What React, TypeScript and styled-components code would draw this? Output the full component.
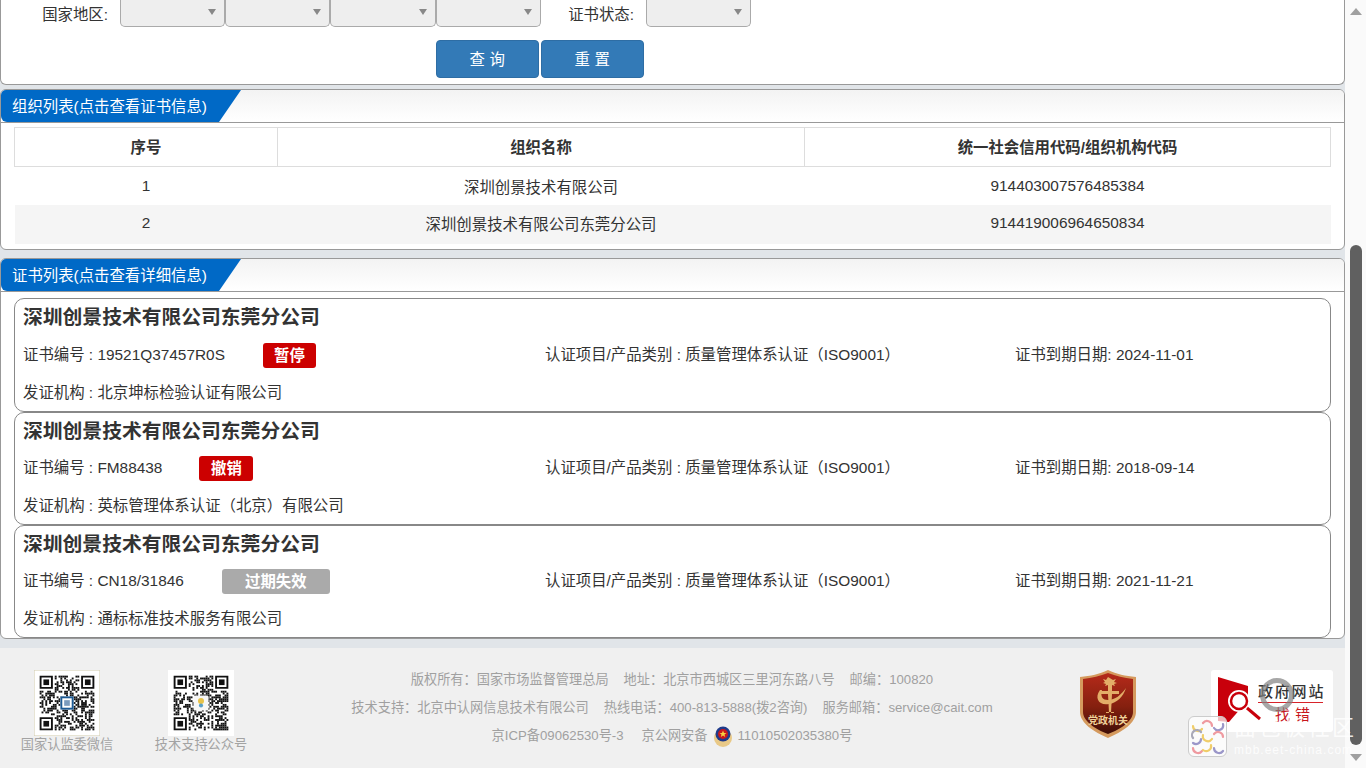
import React from "react";
import styled, { createGlobalStyle } from "styled-components";

const FONT = `"Liberation Sans", "Noto Sans CJK SC", sans-serif`;

const Global = createGlobalStyle`
  html, body { margin: 0; padding: 0; height: 768px; overflow: hidden; background: #e1e5e9; }
  body { font-family: ${FONT}; color: #333; }
  * { box-sizing: border-box; }
`;

const Shell = styled.div`
  position: relative;
  display: flex;
  width: 1366px;
  height: 768px;
  overflow: hidden;
`;
const Main = styled.div`
  width: 1345px;
  flex: none;
  display: flex;
  flex-direction: column;
`;
const ScrollTrack = styled.div`
  width: 21px;
  flex: none;
  background: #fafafa;
  display: flex;
  flex-direction: column;
  align-items: center;
  position: relative;
  padding-left: 1px;
`;
const ArrowUp = styled.div`
  width: 0;
  height: 0;
  margin-top: 8px;
  border-left: 6px solid transparent;
  border-right: 6px solid transparent;
  border-bottom: 7px solid #a0a0a0;
`;
const Thumb = styled.div`
  width: 12px;
  height: 500px;
  margin-top: 230px;
  border-radius: 6px;
  background: #606060;
`;
const ArrowDown = styled.div`
  width: 0;
  height: 0;
  margin-top: 9px;
  border-left: 6px solid transparent;
  border-right: 6px solid transparent;
  border-top: 7px solid #a0a0a0;
`;

const FilterPanel = styled.section`
  height: 85px;
  background: #fff;
  border: 1px solid #999;
  border-top: none;
  border-radius: 0 0 6px 6px;
  display: flex;
  flex-direction: column;
`;
const FilterRow = styled.div`
  display: flex;
  align-items: flex-start;
  height: 40px;
`;
const FilterLabel = styled.label<{ $w: number }>`
  width: ${(p) => p.$w}px;
  flex: none;
  height: 26px;
  line-height: 30px;
  font-size: 15.4px;
  color: #333;
  text-align: right;
  padding-right: 12px;
  white-space: nowrap;
`;
const Select = styled.div<{ $w: number }>`
  width: ${(p) => p.$w}px;
  height: 27px;
  flex: none;
  margin-right: 0;
  background: #eee;
  border: 1px solid #aaa;
  border-top: none;
  border-radius: 0 0 5px 5px;
  position: relative;
  &::after {
    content: "";
    position: absolute;
    right: 8px;
    top: 9px;
    border-left: 4px solid transparent;
    border-right: 4px solid transparent;
    border-top: 6px solid #888;
  }
`;
const ButtonRow = styled.div`
  display: flex;
  gap: 2px;
  padding-left: 435px;
`;
const Btn = styled.button`
  width: 103px;
  height: 38px;
  border: 1px solid #2e6da4;
  border-radius: 4px;
  background: #337ab7;
  color: #fff;
  font-family: ${FONT};
  font-size: 15.4px;
  letter-spacing: 4.5px;
  padding: 0 0 3px 4px;
`;

const Panel = styled.section<{ $mt: number; $h: number }>`
  margin-top: ${(p) => p.$mt}px;
  height: ${(p) => p.$h}px;
  background: #fff;
  border: 1px solid #999;
  border-radius: 6px;
  overflow: hidden;
  flex: none;
`;
const PanelHead = styled.header`
  height: 33px;
  background: linear-gradient(#f3f3f3, #fff);
  border-bottom: 1px solid #999;
  display: flex;
`;
const HeadTab = styled.h2<{ $w: number }>`
  margin: 0;
  width: ${(p) => p.$w}px;
  height: 32px;
  background: #0069c6;
  color: #fff;
  font-size: 15.4px;
  font-weight: normal;
  line-height: 33px;
  padding-left: 11px;
  white-space: nowrap;
  clip-path: polygon(0 0, 100% 0, calc(100% - 22px) 100%, 0 100%);
  border-bottom-left-radius: 6px;
`;
const TableWrap = styled.div`
  padding: 4px 14px 0 13px;
`;
const Table = styled.table`
  width: 1316px;
  border-collapse: collapse;
  table-layout: fixed;
  font-size: 15.4px;
  color: #333;
  th {
    height: 39px;
    border: 1px solid #ddd;
    font-weight: bold;
    text-align: center;
    padding: 0 0 3px;
  }
  td {
    height: 38.5px;
    text-align: center;
    padding: 0 0 1px;
  }
  tbody tr:nth-child(2) td {
    background: #f5f5f5;
    padding-bottom: 3px;
  }
`;
const CardList = styled.div`
  padding: 6px 13px 0;
  display: flex;
  flex-direction: column;
  gap: 0;
`;
const CardTitle = styled.h3`
  margin: 0;
  height: 36px;
  line-height: 36px;
  font-size: 19.8px;
  font-weight: bold;
  color: #333;
`;
const Card = styled.article`
  width: 1317px;
  height: 113px;
  border: 1px solid #888;
  border-radius: 10px;
  padding: 0 8px;
  position: relative;
  background: #fff;
  &:first-child {
    height: 114px;
  }
  &:first-child ${CardTitle} {
    height: 37px;
    line-height: 37px;
  }
`;
const CardRow = styled.div`
  display: flex;
  height: 38px;
  line-height: 38px;
  font-size: 15.4px;
  color: #333;
`;
const Cell = styled.div<{ $w: number }>`
  width: ${(p) => p.$w}px;
  flex: none;
  white-space: nowrap;
  display: flex;
  align-items: center;
`;
const Status = styled.span<{ $grey?: boolean; $ml: number; $w: number }>`
  display: inline-block;
  margin-left: ${(p) => p.$ml}px;
  width: ${(p) => p.$w}px;
  height: 25px;
  line-height: 25px;
  border-radius: 3px;
  text-align: center;
  font-size: 15.4px;
  font-weight: bold;
  color: #fff;
  background: ${(p) => (p.$grey ? "#aaaaaa" : "#cc0000")};
`;

const Footer = styled.footer`
  margin-top: 9px;
  height: 120px;
  background: #f0f0f0;
  position: relative;
  display: flex;
  flex: none;
`;
const QrBlock = styled.div<{ $w: number }>`
  width: ${(p) => p.$w}px;
  flex: none;
  display: flex;
  flex-direction: column;
  align-items: center;
  padding-top: 22px;
  font-size: 13.2px;
  color: #a3a3a3;
  line-height: 18px;
  white-space: nowrap;
`;
const FooterInfo = styled.div`
  width: 642px;
  flex: none;
  margin-left: 83px;
  padding-top: 18px;
  font-size: 13.2px;
  color: #a0a0a0;
  text-align: center;
`;
const InfoLine = styled.div<{ $gap: number }>`
  height: 28px;
  line-height: 28px;
  white-space: nowrap;
  display: flex;
  justify-content: center;
  align-items: center;
  gap: ${(p) => p.$gap}px;
`;
const Inline = styled.span`
  display: inline-flex;
  align-items: center;
  gap: 5px;
`;
const BadgeBox = styled.div`
  margin-left: 86px;
  padding-top: 22px;
  width: 132px;
  flex: none;
`;
const ReportBox = styled.div`
  width: 122px;
  height: 62px;
  margin-top: 22px;
  background: #fff;
  border-radius: 3px;
  position: relative;
  flex: none;
  overflow: hidden;
`;
const ReportTop = styled.span`
  position: absolute;
  left: 47px;
  top: 10px;
  font-size: 15px;
  font-weight: 500;
  color: #333;
  letter-spacing: 1.8px;
  white-space: nowrap;
`;
const ReportBottom = styled.span`
  position: absolute;
  left: 64px;
  top: 33px;
  font-size: 15px;
  color: #c8161d;
  letter-spacing: 5px;
  white-space: nowrap;
`;
const ReportRule = styled.i`
  position: absolute;
  left: 47px;
  top: 32px;
  width: 65px;
  height: 1px;
  background: #d8232a;
`;
const ReportIcon = styled.svg`
  position: absolute;
  left: 5px;
  top: 5px;
`;
const BusyRing = styled.div`
  position: absolute;
  left: 1260px;
  top: 678px;
  width: 34px;
  height: 34px;
  border: 5px solid rgba(130, 130, 130, 0.7);
  border-radius: 50%;
`;
const Watermark = styled.div`
  position: absolute;
  left: 1188px;
  top: 716px;
  display: flex;
  gap: 8px;
  pointer-events: none;
`;
const WmIcon = styled.div`
  width: 39px;
  height: 41px;
  background: rgba(255, 255, 255, 0.72);
  border: 1px solid #ccc;
  border-radius: 6px;
  display: flex;
  align-items: center;
  justify-content: center;
`;
const WmText = styled.div`
  color: rgba(255, 255, 255, 0.85);
  margin-left: -1px;
`;
const WmCn = styled.div`
  font-size: 22px;
  line-height: 24px;
  letter-spacing: 2.5px;
  white-space: nowrap;
`;
const WmEn = styled.div`
  font-size: 12px;
  line-height: 14px;
  letter-spacing: 1px;
  white-space: nowrap;
  margin-top: 3px;
`;

function QR({ seed, frame, center }: { seed: number; frame?: boolean; center: React.ReactNode }) {
  const n = 29;
  const cells: React.ReactNode[] = [];
  let s = seed;
  const rnd = () => {
    s = (s * 1103515245 + 12345) & 0x7fffffff;
    return (s >> 12) % 100 < 52;
  };
  const inFinder = (x: number, y: number) =>
    (x < 8 && y < 8) || (x > n - 9 && y < 8) || (x < 8 && y > n - 9);
  for (let y = 0; y < n; y++)
    for (let x = 0; x < n; x++) {
      const on = rnd();
      if (!inFinder(x, y) && on) cells.push(<rect key={`${x}-${y}`} x={x} y={y} width="1" height="1" />);
    }
  const finder = (x: number, y: number) => (
    <g key={`f${x}${y}`}>
      <path d={`M${x} ${y}h7v7h-7z M${x + 1} ${y + 1}v5h5v-5z`} fillRule="evenodd" />
      <rect x={x + 2} y={y + 2} width="3" height="3" />
    </g>
  );
  return (
    <svg width="66" height="66" viewBox="-3 -3 35 35" style={{ display: "block" }}>
      <rect x="-3" y="-3" width="35" height="35" fill="#fff" stroke={frame ? "#d5cfb4" : "none"} strokeWidth={frame ? 0.6 : 0} />
      <g fill="#111">
        {cells}
        {finder(0, 0)}
        {finder(n - 7, 0)}
        {finder(0, n - 7)}
      </g>
      {center}
    </svg>
  );
}

function PartyBadge() {
  return (
    <svg width="58" height="68" viewBox="0 0 58 68" style={{ display: "block" }}>
      <defs>
        <linearGradient id="sh" x1="0" y1="0" x2="0" y2="1">
          <stop offset="0" stopColor="#b52a1a" />
          <stop offset="0.55" stopColor="#85200f" />
          <stop offset="1" stopColor="#3f0e07" />
        </linearGradient>
      </defs>
      <path d="M1 7C12 6 20 4 29 0c9 4 17 6 28 7v35c0 11-14 20-28 26C15 62 1 53 1 42z" fill="#d59a5e" />
      <path d="M4 9c9-1 17-3 25-6 8 3 16 5 25 6v33c0 9-12 17-25 22C16 59 4 51 4 42z" fill="url(#sh)" />
      <path d="M29 7l-2 3-3-1 2 3-2 1 3 1-1 2 3-1v6h-8v3h8l1 19h-3v-1h8v1h-3l1-19h7v-3h-7v-6l3 1-1-2 3-1-3-1 2-3-3 1z" fill="#e3ad68" />
      <path d="M21 20C15 28 20 36 30 34c8-1 14-7 17-16-5 7-11 12-18 12-5 0-8-3-6-10z" fill="#e3ad68" />
      <text x="29" y="54" textAnchor="middle" fontSize="10" fontWeight="700" fill="#f0d29a" fontFamily={FONT}>党政机关</text>
    </svg>
  );
}

function PoliceEmblem() {
  return (
    <svg width="20" height="24" viewBox="0 0 20 24" style={{ display: "block" }}>
      <ellipse cx="10" cy="14" rx="9" ry="9" fill="#e9c987" />
      <circle cx="10" cy="10" r="7.5" fill="#1f3a8a" />
      <circle cx="10" cy="10" r="5" fill="#c8181d" />
      <path d="M10 6.5l1 2.4 2.5.1-2 1.6.7 2.4L10 11.6 7.8 13l.7-2.4-2-1.6 2.5-.1z" fill="#f5d142" />
    </svg>
  );
}

const rows = [
  ["1", "深圳创景技术有限公司", "914403007576485384"],
  ["2", "深圳创景技术有限公司东莞分公司", "914419006964650834"],
];
const certs = [
  { no: "19521Q37457R0S", status: "暂停", ml: 38, w: 53, date: "2024-11-01", org: "北京坤标检验认证有限公司" },
  { no: "FM88438", status: "撤销", ml: 37, w: 54, date: "2018-09-14", org: "英标管理体系认证（北京）有限公司" },
  { no: "CN18/31846", status: "过期失效", ml: 38, w: 108, grey: true, date: "2021-11-21", org: "通标标准技术服务有限公司" },
];

export default function App() {
  return (
    <Shell>
      <Global />
      <Main>
        <FilterPanel>
          <FilterRow>
            <FilterLabel $w={119}>国家地区:</FilterLabel>
            <Select $w={105} />
            <Select $w={105} />
            <Select $w={106} />
            <Select $w={105} />
            <FilterLabel $w={105}>证书状态:</FilterLabel>
            <Select $w={105} />
          </FilterRow>
          <ButtonRow>
            <Btn>查询</Btn>
            <Btn>重置</Btn>
          </ButtonRow>
        </FilterPanel>

        <Panel $mt={4} $h={161}>
          <PanelHead>
            <HeadTab $w={240}>组织列表(点击查看证书信息)</HeadTab>
          </PanelHead>
          <TableWrap>
            <Table>
              <colgroup>
                <col style={{ width: 263 }} />
                <col style={{ width: 527 }} />
                <col style={{ width: 526 }} />
              </colgroup>
              <thead>
                <tr>
                  <th>序号</th>
                  <th>组织名称</th>
                  <th>统一社会信用代码/组织机构代码</th>
                </tr>
              </thead>
              <tbody>
                {rows.map((r) => (
                  <tr key={r[0]}>
                    {r.map((c) => (
                      <td key={c}>{c}</td>
                    ))}
                  </tr>
                ))}
              </tbody>
            </Table>
          </TableWrap>
        </Panel>

        <Panel $mt={8} $h={381}>
          <PanelHead>
            <HeadTab $w={240}>证书列表(点击查看详细信息)</HeadTab>
          </PanelHead>
          <CardList>
            {certs.map((c) => (
              <Card key={c.no}>
                <CardTitle>深圳创景技术有限公司东莞分公司</CardTitle>
                <CardRow>
                  <Cell $w={522}>
                    证书编号 : {c.no}
                    <Status $ml={c.ml} $w={c.w} $grey={c.grey}>{c.status}</Status>
                  </Cell>
                  <Cell $w={470}>认证项目/产品类别 : 质量管理体系认证（ISO9001）</Cell>
                  <Cell $w={300}>证书到期日期: {c.date}</Cell>
                </CardRow>
                <CardRow>发证机构 : {c.org}</CardRow>
              </Card>
            ))}
          </CardList>
        </Panel>

        <Footer>
          <QrBlock $w={134}>
            <QR
              seed={17}
              frame
              center={
                <g>
                  <rect x="11" y="11" width="7" height="7" fill="#fff" />
                  <rect x="11.5" y="11.5" width="6" height="6" fill="none" stroke="#1c5a94" strokeWidth="1" />
                  <rect x="13" y="13" width="3" height="3" fill="#7a9bbd" />
                </g>
              }
            />
            国家认监委微信
          </QrBlock>
          <QrBlock $w={134}>
            <QR
              seed={91}
              center={
                <g>
                  <rect x="10.5" y="10.5" width="8" height="8" rx="1" fill="#f7f7f7" />
                  <circle cx="14.5" cy="13.5" r="1.6" fill="#e7c34a" />
                  <circle cx="14.5" cy="15.8" r="1.1" fill="#5aa0c8" />
                </g>
              }
            />
            技术支持公众号
          </QrBlock>
          <FooterInfo>
            <InfoLine $gap={15}>
              <span>版权所有：国家市场监督管理总局</span>
              <span>地址：北京市西城区三里河东路八号</span>
              <span>邮编：100820</span>
            </InfoLine>
            <InfoLine $gap={15}>
              <span>技术支持：北京中认网信息技术有限公司</span>
              <span>热线电话：400-813-5888(拨2咨询)</span>
              <span>服务邮箱：service@cait.com</span>
            </InfoLine>
            <InfoLine $gap={18}>
              <span>京ICP备09062530号-3</span>
              <Inline>
                京公网安备
                <PoliceEmblem />
                11010502035380号
              </Inline>
            </InfoLine>
          </FooterInfo>
          <BadgeBox>
            <PartyBadge />
          </BadgeBox>
          <ReportBox>
            <ReportIcon width="56" height="52" viewBox="0 0 56 52">
              <path d="M2 2l30 9v14L13 47 2 46z" fill="#c8000b" />
              <circle cx="23" cy="26" r="11" fill="#fff" />
              <circle cx="23" cy="26" r="8" fill="#fff" stroke="#c8000b" strokeWidth="2.5" />
              <path d="M31 33l13 11" stroke="#c8000b" strokeWidth="3" />
            </ReportIcon>
            <ReportTop>政府网站</ReportTop>
            <ReportRule />
            <ReportBottom>找错</ReportBottom>
          </ReportBox>
        </Footer>
      </Main>
      <ScrollTrack>
        <ArrowUp />
        <Thumb />
        <ArrowDown />
      </ScrollTrack>
      <BusyRing />
      <Watermark>
        <WmIcon>
          <svg width="34" height="36" viewBox="0 0 34 36" fill="none" strokeWidth="2.2" strokeLinecap="round">
            <path d="M2 7a5 5 0 0 0 9 3" stroke="#f0cd6a" />
            <path d="M12 4a5 5 0 0 1 9 3" stroke="#ef9aa0" />
            <path d="M23 9a5 5 0 0 0 9-4" stroke="#9b97c9" />
            <path d="M2 19a5 5 0 0 1 8-6" stroke="#a9a9b8" />
            <path d="M12 16a5 5 0 0 0 9 4" stroke="#f0cd6a" />
            <path d="M23 15a5 5 0 0 1 9 3" stroke="#ef9aa0" />
            <path d="M10 20a5 5 0 0 1-8 4" stroke="#9b97c9" />
            <path d="M2 29a5 5 0 0 0 9 3" stroke="#ef9aa0" />
            <path d="M12 31a5 5 0 0 0 8-5" stroke="#f0cd6a" />
            <path d="M23 29a5 5 0 0 0 9 3" stroke="#9b97c9" />
          </svg>
        </WmIcon>
        <WmText>
          <WmCn>面包板社区</WmCn>
          <WmEn>mbb.eet-china.com</WmEn>
        </WmText>
      </Watermark>
    </Shell>
  );
}
